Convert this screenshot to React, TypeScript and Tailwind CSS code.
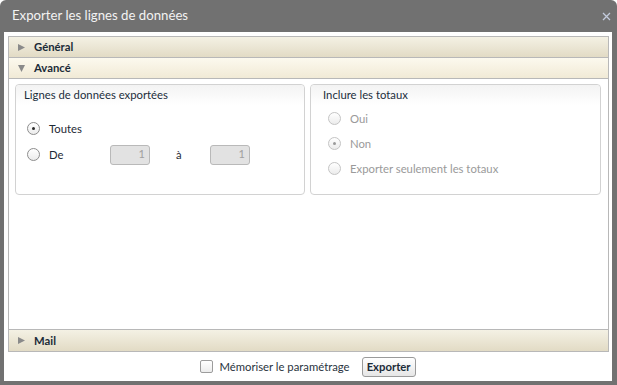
import React from "react";

const font = { fontFamily: "Lato, 'Liberation Sans', sans-serif" };

function TriRight() {
  return (
    <svg width="9" height="9" viewBox="0 0 9 9" className="shrink-0">
      <polygon points="1,1 8,4.5 1,8" fill="#8a8a8a" />
    </svg>
  );
}
function TriDown() {
  return (
    <svg width="9" height="9" viewBox="0 0 9 9" className="shrink-0">
      <polygon points="1,1 8,1 4.5,8" fill="#8a8a8a" />
    </svg>
  );
}

function Header({ label, open, active, tall }: { label: string; open?: boolean; active?: boolean; tall?: boolean }) {
  return (
    <div
      className={
        (tall ? "h-[21px] " : "h-[20px] ") +
        "flex items-center pl-[8px] gap-[8px] " +
        (active
          ? "bg-gradient-to-b from-[#fcf9ee] to-[#f1ead6]"
          : "bg-gradient-to-b from-[#f4f1e4] to-[#e2dbc5]")
      }
    >
      {open ? <TriDown /> : <TriRight />}
      <span className="text-[11.3px] font-bold text-[#1b2b38] leading-none">{label}</span>
    </div>
  );
}

function Radio({ checked, disabled }: { checked?: boolean; disabled?: boolean }) {
  return (
    <span
      className={
        "w-[13px] h-[13px] rounded-full border flex items-center justify-center shrink-0 bg-gradient-to-b from-white to-[#ececec] " +
        (disabled ? "border-[#c4c4c4]" : "border-[#8d8d8d]")
      }
    >
      {checked && (
        <span
          className={"w-[3px] h-[3px] rounded-full " + (disabled ? "bg-[#9a9a9a]" : "bg-[#2a2a2a]")}
        />
      )}
    </span>
  );
}

function NumInput() {
  return (
    <div className="w-[40px] h-[20px] rounded-[3px] border border-[#b9b9b9] bg-[#e2e2e2] flex items-center justify-end pr-[4px] text-[11px] text-[#a0a0a0]">
      1
    </div>
  );
}

export default function App() {
  return (
    <div className="w-[617px] h-[385px] bg-white" style={font}>
      <div className="w-[617px] h-[385px] bg-[#717171] rounded-t-[6px] flex flex-col">
        <div className="h-[32px] shrink-0 flex items-center justify-between pl-[12px] pr-[6px]">
          <span className="text-[13.2px] text-[#f3f3f3] leading-none">Exporter les lignes de données</span>
          <svg width="9" height="9" viewBox="0 0 9 9" className="mt-[1px]">
            <path d="M1 1 L8 8 M8 1 L1 8" stroke="#c3cbdc" strokeWidth="1.3" />
          </svg>
        </div>
        <div className="flex-1 ml-[4px] mr-[5px] mb-[4px] bg-white flex flex-col">
          <div className="mt-[4px] ml-[4px] mr-[3px] flex-1 border border-[#b8b8b8] flex flex-col">
            <Header label="Général" />
            <div className="h-px bg-[#b8b8b8]" />
            <Header label="Avancé" open active />
            <div className="h-px bg-[#b8b8b8]" />
            <div className="flex-1 flex gap-[5px] pl-[6px] pt-[5px]">
              <div className="w-[290px] h-[111px] border border-[#d2d2d2] rounded-[4px] flex flex-col">
                <div className="h-[20px] pl-[8px] flex items-center rounded-t-[4px] bg-gradient-to-b from-[#f3f3f3] to-white">
                  <span className="text-[11.3px] text-[#1b2e3c] leading-none">Lignes de données exportées</span>
                </div>
                <div className="flex flex-col pl-[11px] pt-[17px] gap-[13px]">
                  <div className="flex items-center h-[13px]">
                    <Radio checked />
                    <span className="ml-[9px] text-[11.3px] text-[#1e2a35] leading-none">Toutes</span>
                  </div>
                  <div className="flex items-center h-[13px]">
                    <Radio />
                    <span className="ml-[9px] w-[61px] text-[11.3px] text-[#1e2a35] leading-none">De</span>
                    <NumInput />
                    <span className="w-[60px] pl-[26px] text-[11.3px] text-[#1e2a35] leading-none">à</span>
                    <NumInput />
                  </div>
                </div>
              </div>
              <div className="w-[291px] h-[111px] border border-[#d2d2d2] rounded-[4px] flex flex-col">
                <div className="h-[20px] pl-[12px] flex items-center rounded-t-[4px] bg-gradient-to-b from-[#f3f3f3] to-white">
                  <span className="text-[11.3px] text-[#1b2e3c] leading-none">Inclure les totaux</span>
                </div>
                <div className="flex flex-col pl-[17px] pt-[7px] gap-[12px]">
                  {[
                    { l: "Oui", c: false },
                    { l: "Non", c: true },
                    { l: "Exporter seulement les totaux", c: false },
                  ].map((r) => (
                    <div key={r.l} className="flex items-center h-[13px]">
                      <Radio checked={r.c} disabled />
                      <span className="ml-[9px] text-[11.3px] text-[#9a9a9a] leading-none">{r.l}</span>
                    </div>
                  ))}
                </div>
              </div>
            </div>
            <div className="h-px bg-[#b8b8b8]" />
            <Header label="Mail" tall />
          </div>
          <div className="h-[29px] shrink-0 flex items-center justify-center">
            <span className="w-[13px] h-[13px] border border-[#9c9c9c] rounded-[2px] bg-gradient-to-b from-white to-[#ececec]" />
            <span className="ml-[6px] text-[11.3px] text-[#2a3440] leading-none">Mémoriser le paramétrage</span>
            <button className="ml-[12px] h-[20px] w-[54px] border border-[#9a9a9a] rounded-[3px] bg-gradient-to-b from-white to-[#e6e6e6] text-[11.3px] font-bold text-[#1b2b38] leading-none flex items-center justify-center">
              Exporter
            </button>
          </div>
        </div>
      </div>
    </div>
  );
}
